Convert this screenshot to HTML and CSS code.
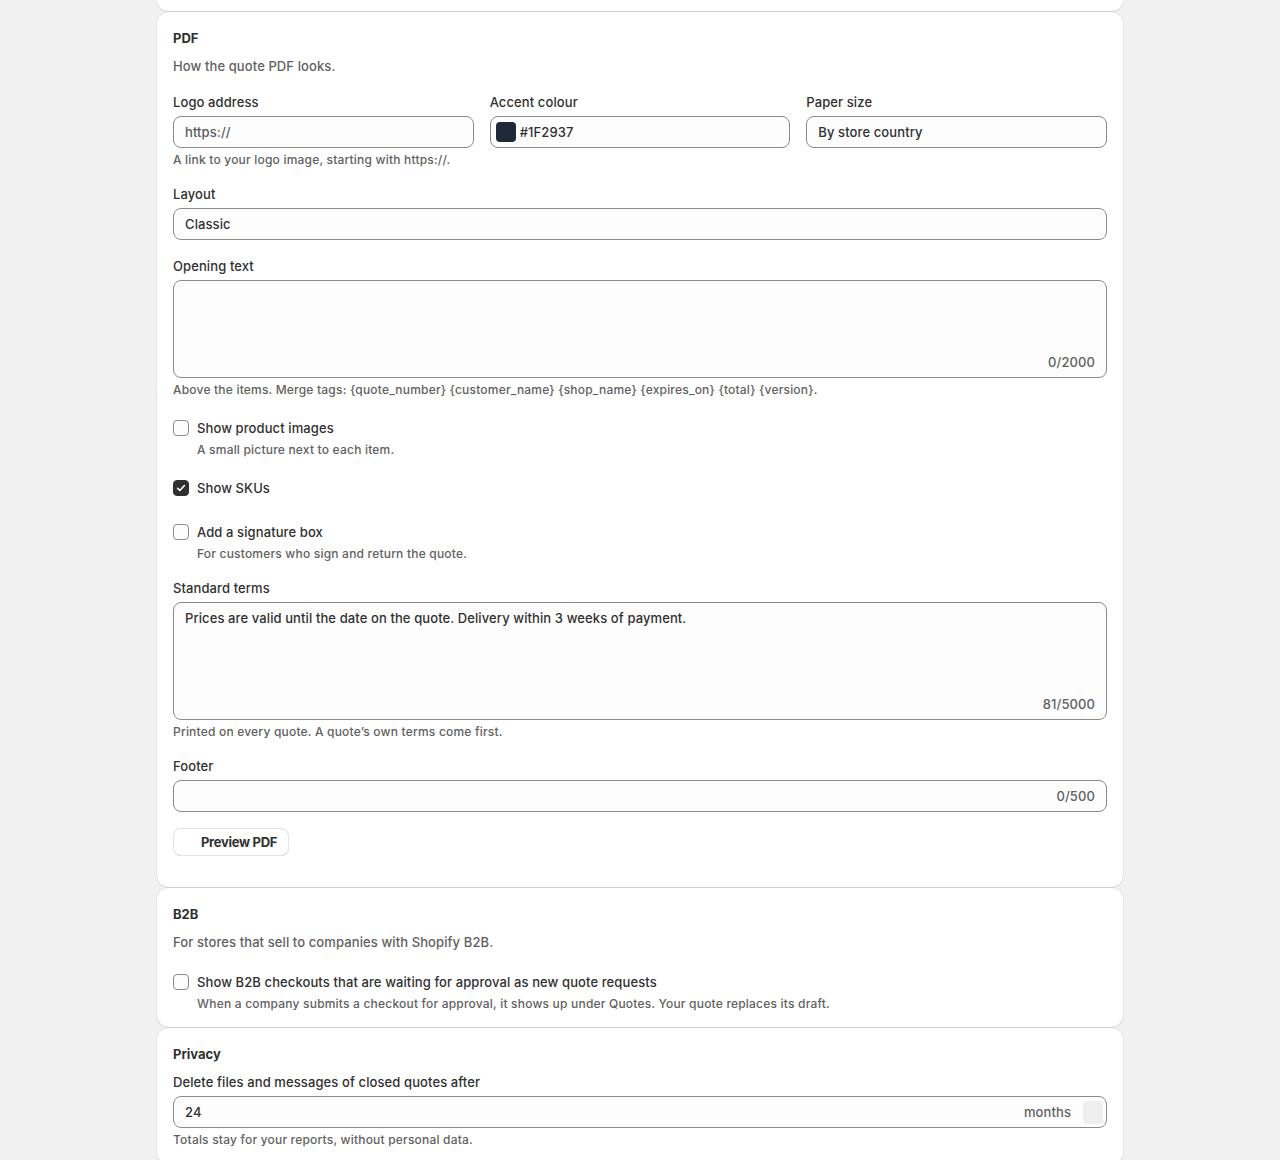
FILE: index.html
```html
<!DOCTYPE html>
<html lang="en">
<head>
<meta charset="utf-8">
<title>Settings</title>
<link rel="stylesheet" href="styles.css">
</head>
<body>
<main class="page">
  <section class="card card-stub"></section>

  <section class="card card-pdf">
    <h2 class="card-title">PDF</h2>
    <p class="card-desc">How the quote PDF looks.</p>

    <div class="grid3 field">
      <div>
        <div class="label">Logo address</div>
        <div class="input"><span class="placeholder">https://</span></div>
        <p class="help">A link to your logo image, starting with https://.</p>
      </div>
      <div>
        <div class="label">Accent colour</div>
        <div class="input input-colour"><span class="swatch"></span><span>#1F2937</span></div>
      </div>
      <div>
        <div class="label">Paper size</div>
        <div class="input">By store country</div>
      </div>
    </div>

    <div class="field">
      <div class="label">Layout</div>
      <div class="input">Classic</div>
    </div>

    <div class="field">
      <div class="label">Opening text</div>
      <div class="textarea textarea-sm"><span class="text"></span><span class="counter">0/2000</span></div>
      <p class="help">Above the items. Merge tags: {quote_number} {customer_name} {shop_name} {expires_on} {total} {version}.</p>
    </div>

    <div class="checks">
      <div class="check">
        <div class="check-row"><span class="box"></span><span>Show product images</span></div>
        <p class="help check-help">A small picture next to each item.</p>
      </div>
      <div class="check check-mid">
        <div class="check-row"><span class="box box-on"><svg viewBox="0 0 16 16" width="16" height="16"><path d="M4.6 8.3l2.2 2.2 4.6-5" fill="none" stroke="#fff" stroke-width="1.6" stroke-linecap="round" stroke-linejoin="round"/></svg></span><span>Show SKUs</span></div>
      </div>
      <div class="check check-last">
        <div class="check-row"><span class="box"></span><span>Add a signature box</span></div>
        <p class="help check-help">For customers who sign and return the quote.</p>
      </div>
    </div>

    <div class="field">
      <div class="label">Standard terms</div>
      <div class="textarea textarea-lg"><span class="text">Prices are valid until the date on the quote. Delivery within 3 weeks of payment.</span><span class="counter">81/5000</span></div>
      <p class="help">Printed on every quote. A quote’s own terms come first.</p>
    </div>

    <div class="field">
      <div class="label">Footer</div>
      <div class="input input-count"><span></span><span class="counter-inline">0/500</span></div>
    </div>

    <div class="field actions">
      <button class="btn" type="button"><span class="btn-icon"></span>Preview PDF</button>
    </div>
  </section>

  <section class="card card-b2b">
    <h2 class="card-title">B2B</h2>
    <p class="card-desc">For stores that sell to companies with Shopify B2B.</p>
    <div class="checks checks-b2b">
      <div class="check">
        <div class="check-row"><span class="box"></span><span>Show B2B checkouts that are waiting for approval as new quote requests</span></div>
        <p class="help check-help">When a company submits a checkout for approval, it shows up under Quotes. Your quote replaces its draft.</p>
      </div>
    </div>
  </section>

  <section class="card">
    <h2 class="card-title">Privacy</h2>
    <div class="field field-tight">
      <div class="label">Delete files and messages of closed quotes after</div>
      <div class="input input-suffix"><span>24</span><span class="suffix">months</span><span class="spinner"></span></div>
      <p class="help">Totals stay for your reports, without personal data.</p>
    </div>
  </section>
</main>
</body>
</html>
```

FILE: styles.css
```css
* { box-sizing: border-box; }

html, body {
  margin: 0;
  padding: 0;
  background: #f1f1f1;
}

body {
  font-family: Inter, "Noto Sans", "Liberation Sans", sans-serif;
  font-size: 13px;
  line-height: 20px;
  font-weight: 450;
  letter-spacing: 0.1px;
  color: #303030;
}

.page {
  width: 966px;
  margin: 0 auto;
  padding-bottom: 24px;
}

.card {
  background: #ffffff;
  border-radius: 12px;
  padding: 16px;
  margin-bottom: 1px;
  box-shadow: 0 0 0 1px rgba(0, 0, 0, 0.045), 0 1px 0 rgba(26, 26, 26, 0.07);
}

.card-stub {
  height: 11px;
  padding: 0;
  border-radius: 0 0 12px 12px;
}

.card-pdf {
  padding-bottom: 31px;
}

.card-b2b {
  padding-bottom: 15px;
}

.card-title {
  margin: 0;
  font-size: 13px;
  line-height: 20px;
  font-weight: 650;
  letter-spacing: 0;
  color: #303030;
}

.card-desc {
  margin: 8px 0 0;
  color: #616161;
}

.field {
  margin-top: 16px;
}

.field-tight {
  margin-top: 8px;
}

.grid3 {
  display: grid;
  grid-template-columns: 1fr 1fr 1fr;
  gap: 16px;
}

.label {
  margin-bottom: 4px;
  color: #303030;
}

.input {
  height: 32px;
  border: 1px solid #8a8a8a;
  border-radius: 8px;
  background: #fdfdfd;
  padding: 5px 11px;
  display: flex;
  align-items: center;
  color: #303030;
  white-space: nowrap;
}

.placeholder {
  color: #5a5a5a;
}

.input-colour {
  padding-left: 5px;
  gap: 4px;
}

.swatch {
  width: 20px;
  height: 20px;
  border-radius: 4px;
  background: #1f2937;
}

.input-count {
  justify-content: space-between;
}

.counter-inline,
.counter {
  color: #616161;
}

.input-suffix {
  padding-right: 3px;
}

.input-suffix > span:first-child {
  flex: 1;
}

.suffix {
  color: #616161;
  margin-right: 12px;
}

.spinner {
  width: 20px;
  height: 23px;
  border-radius: 4px;
  background: #efefef;
}

.textarea {
  border: 1px solid #8a8a8a;
  border-radius: 8px;
  background: #fdfdfd;
  padding: 5px 11px;
  display: flex;
  flex-direction: column;
  justify-content: space-between;
}

.textarea-sm { height: 98px; }
.textarea-lg { height: 118px; }

.textarea .text {
  min-height: 20px;
}

.textarea .counter {
  align-self: flex-end;
}

.help {
  margin: 4px 0 0;
  font-size: 12px;
  line-height: 16px;
  letter-spacing: 0.2px;
  color: #616161;
}

.checks {
  margin-top: 20px;
  margin-bottom: 1px;
}

.check-mid {
  margin-top: 20px;
}

.check-last {
  margin-top: 24px;
}

.checks-b2b {
  margin-top: 20px;
  margin-bottom: 0;
}

.check-row {
  display: flex;
  align-items: center;
  gap: 8px;
}

.box {
  width: 16px;
  height: 16px;
  border: 1px solid #8a8a8a;
  border-radius: 4px;
  background: #fdfdfd;
  flex: none;
  display: flex;
  align-items: center;
  justify-content: center;
}

.box-on {
  background: #303030;
  border-color: #303030;
}

.box-on svg {
  display: block;
  flex: none;
}

.check-help {
  margin-left: 24px;
}

.actions {
  display: flex;
}

.btn {
  height: 28px;
  display: inline-flex;
  align-items: center;
  padding: 0 12px;
  border: 0;
  border-radius: 8px;
  background: #ffffff;
  font-family: inherit;
  font-size: 13px;
  font-weight: 650;
  letter-spacing: -0.3px;
  color: #303030;
  box-shadow: inset 0 0 0 1px #e3e3e3, inset 0 -1px 0 #cfcfcf;
  cursor: pointer;
}

.btn-icon {
  width: 16px;
  height: 16px;
}
```
